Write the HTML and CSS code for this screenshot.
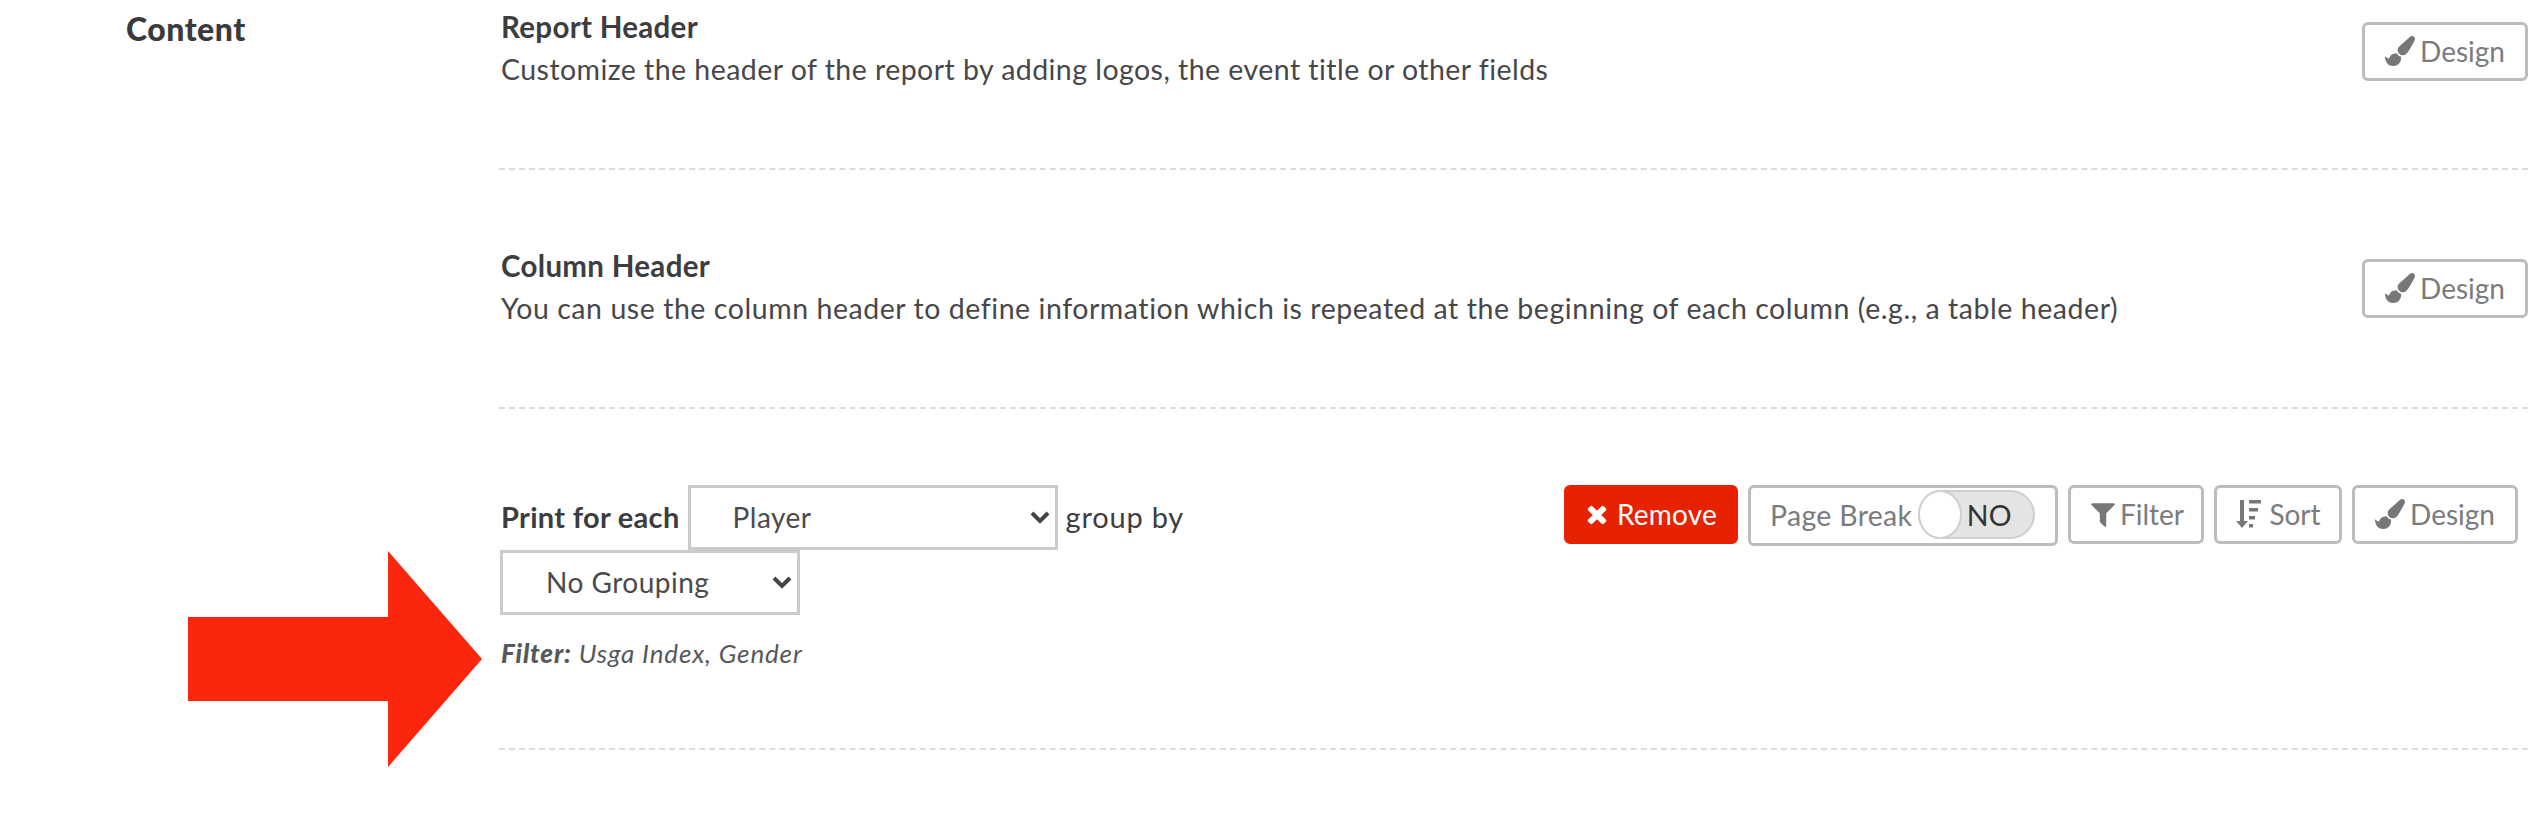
FILE: index.html
```html
<!DOCTYPE html>
<html lang="en">
<head>
<meta charset="utf-8">
<title>Content</title>
<link rel="stylesheet" href="styles.css">
</head>
<body>
<svg width="0" height="0" class="defs">
  <symbol id="brush" viewBox="0 0 1792 1792"><path d="M1615 0q70 0 122.500 46.500t52.500 116.500q0 63-45 151-332 629-465 752-97 91-218 91-126 0-216.500-92.500t-90.500-219.500q0-128 92-212l638-579q59-54 130-54zm-909 1034q39 76 106.500 130t150.500 76l1 71q4 213-129.500 347t-348.500 134q-123 0-218-46.500t-152.500-127.500-86.500-183-29-220q7 5 41 30t62 44.500 59 36.500 46 17q41 0 55-37 25-66 57.500-112.500t69.500-76 88-47.500 103-25.500 125-10.500z"/></symbol>
</svg>
<main class="section">
  <h2 class="section-title">Content</h2>
  <div class="rows">
    <section class="row row-first">
      <div class="row-text">
        <h3>Report Header</h3>
        <p>Customize the header of the report by adding logos, the event title or other fields</p>
      </div>
      <button class="btn"><svg class="ico"><use href="#brush"/></svg>Design</button>
    </section>
    <section class="row row-second">
      <div class="row-text">
        <h3>Column Header</h3>
        <p>You can use the column header to define information which is repeated at the beginning of each column (e.g., a table header)</p>
      </div>
      <button class="btn"><svg class="ico"><use href="#brush"/></svg>Design</button>
    </section>
    <section class="row row-third">
      <div class="print">
        <div class="print-line">
          <strong>Print for each</strong>
          <span class="sel sel-player"><select><option>Player</option></select><svg class="chev" viewBox="0 0 20 14"><path d="M2 3l8 8 8-8" /></svg></span>
          <span class="group-by">group by</span>
        </div>
        <div class="print-line">
          <span class="sel sel-group"><select><option>No Grouping</option></select><svg class="chev" viewBox="0 0 20 14"><path d="M2 3l8 8 8-8" /></svg></span>
        </div>
        <p class="filter-note"><b>Filter:</b> Usga Index, Gender</p>
      </div>
      <div class="actions">
        <button class="btn btn-danger"><svg class="ico ico-x" viewBox="0 0 1792 1792"><path d="M1490 1322q0 40-28 68l-136 136q-28 28-68 28t-68-28l-294-294-294 294q-28 28-68 28t-68-28l-136-136q-28-28-28-68t28-68l294-294-294-294q-28-28-28-68t28-68l136-136q28-28 68-28t68 28l294 294 294-294q28-28 68-28t68 28l136 136q28 28 28 68t-28 68l-294 294 294 294q28 28 28 68z"/></svg>Remove</button>
        <div class="btn btn-break">Page Break<span class="toggle"><span class="knob"></span><span class="toggle-label">NO</span></span></div>
        <button class="btn btn-filter"><svg class="ico" viewBox="0 0 1792 1792"><path d="M1595 295q17 41-14 70l-493 493v742q0 42-39 59-13 5-25 5-27 0-45-19l-256-256q-19-19-19-45v-486l-493-493q-31-29-14-70 17-39 59-39h1280q42 0 59 39z"/></svg>Filter</button>
        <button class="btn btn-sort"><svg class="ico ico-sort" viewBox="0 0 26 28"><path d="M5 0h4v21h4l-6 7-6-7h4zM14 0h12v3.500H14zM14 8h9v3.500h-9zM14 16h6v3.500h-6zM14 24h4v3.500h-4z"/></svg>Sort</button>
        <button class="btn btn-design"><svg class="ico"><use href="#brush"/></svg>Design</button>
      </div>
    </section>
  </div>
</main>
<svg class="arrow" viewBox="0 0 294 216"><path d="M0 66H200V0L294 108 200 216V150H0z"/></svg>
</body>
</html>
```

FILE: styles.css
```css
* { box-sizing: border-box; }
html, body { margin: 0; padding: 0; background: #fff; }
body {
  position: relative;
  height: 820px;
  overflow: hidden;
  font-family: Lato, "Open Sans", sans-serif;
  font-size: 29px;
  letter-spacing: .3px;
  color: #3d3d40;
}
.defs { position: absolute; }
.section {
  display: grid;
  grid-template-columns: 499px 2029px;
  align-items: start;
}
.section-title {
  margin: 10px 0 0 126px;
  font-size: 32px;
  line-height: 38px;
  font-weight: 900;
  letter-spacing: .5px;
  color: #3a3a3d;
}
.row {
  display: flex;
  justify-content: space-between;
  align-items: flex-start;
  border-bottom: 2px dashed #dcdcdc;
}
.row-first { height: 170px; padding-top: 8px; }
.row-second { height: 239px; padding-top: 77px; }
.row-third { height: 341px; padding-top: 76px; padding-right: 10px; }
.row-first .btn { margin-top: 14px; width: 166px; }
.row-second .btn { margin-top: 12px; width: 166px; }
.row-text { margin-left: 2px; }
h3 {
  margin: 0;
  font-size: 29.500px;
  line-height: 38px;
  font-weight: 700;
  color: #3d3d40;
}
.row-text p {
  margin: 4px 0 0;
  font-size: 28.500px;
  line-height: 38px;
  font-weight: 400;
  letter-spacing: .45px;
  color: #47474a;
}
.row-second .row-text p { letter-spacing: .55px; }
.btn {
  display: inline-flex;
  align-items: center;
  justify-content: center;
  height: 59px;
  padding: 0 0 2px;
  background: #fff;
  border: 3px solid #bcbcc0;
  border-radius: 6px;
  font: inherit;
  font-size: 28px;
  color: #7b7b7e;
  white-space: nowrap;
}
.ico { width: 30px; height: 30px; margin-right: 5px; fill: #77777a; flex: none; }
.ico-sort { width: 26px; height: 28px; margin-right: 8px; }
.actions { display: flex; gap: 10px; align-items: flex-start; }
.btn-danger { width: 174px; padding-right: 2px; background: #e62200; border-color: #e62200; color: #fff; letter-spacing: .2px; }
.btn-danger .ico { fill: #fff; width: 28px; height: 28px; margin-right: 6px; }
.btn-break {
  height: 61px;
  width: 310px;
  padding: 0 20px 2px 19px;
  justify-content: space-between;
  font-size: 28.500px;
}
.btn-filter { width: 136px; }
.btn-filter .ico { margin-right: 2px; }
.btn-sort { width: 128px; }
.btn-design { width: 166px; }
.toggle {
  position: relative;
  display: flex;
  align-items: center;
  justify-content: flex-end;
  width: 117px;
  height: 49px;
  background: #e4e4e4;
  border: 2px solid #cfcfcf;
  border-radius: 25px;
  padding-right: 21px;
  flex: none;
}
.knob {
  position: absolute;
  left: -2px;
  top: -2px;
  width: 44px;
  height: 49px;
  background: #fff;
  border: 2px solid #cfcfcf;
  border-radius: 50%;
}
.toggle-label { color: #333; }
.print { width: 1000px; margin-left: 2px; }
.print-line { display: flex; align-items: flex-start; gap: 8px; line-height: 64px; color: #3d3d40; }
.print-line strong { font-weight: 700; color: #3d3d40; }
.group-by { letter-spacing: .8px; }
.sel {
  position: relative;
  display: block;
  height: 65px;
  background: #fff;
  border: 3px solid #cbcbcb;
}
.sel-group { margin-left: -1px; }
.sel select {
  appearance: none;
  display: block;
  width: 100%;
  height: 57px;
  padding: 0 0 0 42px;
  background: transparent;
  border: 0;
  border-radius: 0;
  font: inherit;
  font-size: 28px;
  line-height: 40px;
  letter-spacing: .5px;
  color: #4a4a4d;
}
.sel-player { width: 370px; }
.sel-group { width: 300px; }
.sel-group select { padding-left: 43px; }
.chev {
  position: absolute;
  right: 5px;
  top: 22px;
  width: 20px;
  height: 14px;
  fill: none;
  stroke: #444;
  stroke-width: 4;
}
.filter-note { margin: 22px 0 0; font-size: 26px; line-height: 32px; font-style: italic; letter-spacing: .85px; color: #58585b; }
.filter-note b { font-weight: 900; }
.arrow {
  position: absolute;
  left: 188px;
  top: 551px;
  width: 294px;
  height: 216px;
  fill: #fb260d;
}
```
